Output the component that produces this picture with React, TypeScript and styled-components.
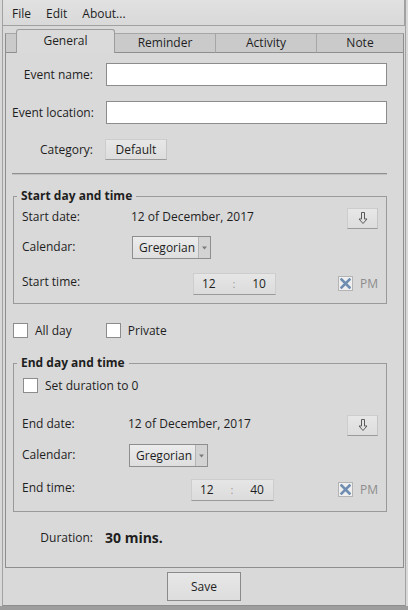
import React from "react";
import styled, { createGlobalStyle } from "styled-components";

const Global = createGlobalStyle`
  html, body { margin: 0; padding: 0; background: #d9d9d9; }
  body {
    font-family: "Open Sans", "Noto Sans", sans-serif;
    font-size: 12px;
    line-height: 16px;
    color: #1e1e1e;
  }
  * { box-sizing: border-box; }
`;

const Window = styled.div`
  width: 408px;
  height: 610px;
  padding: 0 2px;
  background: #d9d9d9;
  display: flex;
  flex-direction: column;
  border-bottom: 4px solid #9d9d9d;
`;

const Frame = styled.div`
  flex: 1;
  display: flex;
  flex-direction: column;
  border-left: 1px solid #a2a2a2;
  border-right: 1px solid #a2a2a2;
  border-bottom: 1px solid #8e8e8e;
  min-height: 0;
`;

const MenuBar = styled.div`
  height: 26px;
  display: flex;
  align-items: center;
  gap: 15px;
  padding: 2px 0 0 9px;
  background: linear-gradient(#e1e1e1, #d9d9d9);
  border-bottom: 1px solid #a0a0a0;
  border-right: 1px solid #a0a0a0;
`;

const MenuItem = styled.span`
  color: #1e1e1e;
`;

const TabBar = styled.div`
  margin: 3px 1px 0 2px;
  height: 24px;
  display: flex;
  align-items: flex-end;
`;

const TabLead = styled.div`
  width: 11px;
  height: 20px;
  background: #cacaca;
  border-left: 1px solid #8e8e8e;
  border-top: 1px solid #a6a6a6;
  border-bottom: 1px solid #8e8e8e;
`;

const Tab = styled.div<{ $w: number; $active?: boolean; $last?: boolean }>`
  width: ${(p) => p.$w}px;
  height: ${(p) => (p.$active ? 24 : 20)}px;
  display: flex;
  align-items: center;
  justify-content: center;
  padding-bottom: ${(p) => (p.$active ? 1 : 0)}px;
  background: ${(p) => (p.$active ? "#dadada" : "#cacaca")};
  border-top: 1px solid ${(p) => (p.$active ? "#9c9c9c" : "#a6a6a6")};
  border-left: ${(p) => (p.$active ? "1px solid #9c9c9c" : "none")};
  border-right: 1px solid ${(p) => (p.$active ? "#9c9c9c" : p.$last ? "#8e8e8e" : "#a6a6a6")};
  border-bottom: ${(p) => (p.$active ? "none" : "1px solid #8e8e8e")};
  border-radius: ${(p) => (p.$active ? "3px 3px 0 0" : "0")};
  color: #1e1e1e;
`;

const Panel = styled.div`
  flex: 1;
  margin: 0 1px 0 2px;
  border: 1px solid #8e8e8e;
  border-top: none;
  padding: 10px 16px 0 6px;
  display: flex;
  flex-direction: column;
`;

const FormGrid = styled.div`
  display: grid;
  grid-template-columns: 81px 1fr;
  column-gap: 13px;
  row-gap: 15px;
  align-items: center;
`;

const FormLabel = styled.label`
  text-align: right;
  white-space: nowrap;
`;

const TextInput = styled.input`
  height: 23px;
  width: 100%;
  border: 1px solid #8c8c8c;
  background: #ffffff;
  padding: 0 4px;
  font: inherit;
  outline: none;
`;

const Button = styled.button<{ $w: number; $h: number; $framed?: boolean }>`
  width: ${(p) => p.$w}px;
  height: ${(p) => p.$h}px;
  padding: 0;
  font: inherit;
  color: #1e1e1e;
  display: flex;
  align-items: center;
  justify-content: center;
  background: linear-gradient(#e7e7e7, #dddddd);
  border: 1px solid ${(p) => (p.$framed ? "#8a8a8a" : "#cdcdcd")};
  border-bottom-color: ${(p) => (p.$framed ? "#8a8a8a" : "#9a9a9a")};
  border-right-color: ${(p) => (p.$framed ? "#8a8a8a" : "#c4c4c4")};
  border-radius: 0;
`;

const CategoryButton = styled(Button)`
  margin-left: -1px;
`;

const Separator = styled.div`
  margin-top: 13px;
  height: 2px;
  border-top: 1px solid #8f8f8f;
  border-bottom: 1px solid #c2c2c2;
`;

const Group = styled.fieldset<{ $mt: number; $pt: number; $pb: number }>`
  margin: ${(p) => p.$mt}px 0 0 1px;
  border: 1px solid #9a9a9a;
  padding: ${(p) => p.$pt}px 8px ${(p) => p.$pb}px 8px;
  min-width: 0;
`;

const Legend = styled.legend`
  font-weight: 700;
  line-height: 14px;
  padding: 0 4px;
  margin-left: -5px;
`;

const Row = styled.div<{ $mt?: number; $h: number }>`
  display: flex;
  align-items: center;
  height: ${(p) => p.$h}px;
  margin-top: ${(p) => p.$mt ?? 0}px;
`;

const RowLabel = styled.span<{ $w: number; $lift?: number }>`
  width: ${(p) => p.$w}px;
  flex: none;
  white-space: nowrap;
  padding-bottom: ${(p) => (p.$lift ?? 0) * 2}px;
`;

const Value = styled.span<{ $lift?: number }>`
  white-space: nowrap;
  padding-bottom: ${(p) => (p.$lift ?? 0) * 2}px;
`;

const Right = styled.div`
  margin-left: auto;
  display: flex;
  align-items: center;
  gap: 7px;
`;

const Combo = styled.div`
  width: 79px;
  height: 23px;
  display: flex;
  border: 1px solid #8e8e8e;
  background: linear-gradient(#ececec, #dedede);
`;

const ComboText = styled.span`
  flex: 1;
  display: flex;
  align-items: center;
  padding-left: 6px;
`;

const ComboArrow = styled.span`
  width: 12px;
  display: flex;
  align-items: center;
  justify-content: center;
  background: #d3d3d3;
  border-left: 1px solid #b4b4b4;
`;

const TimeBox = styled.div<{ $ml: number }>`
  margin-left: ${(p) => p.$ml}px;
  width: 83px;
  height: 22px;
  display: flex;
  align-items: center;
  justify-content: space-between;
  padding: 0 9px 0 8px;
  background: linear-gradient(#e6e6e6, #dcdcdc);
  border: 1px solid #cdcdcd;
  border-bottom-color: #9a9a9a;
`;

const Colon = styled.span`
  color: #9a9a9a;
  font-size: 11px;
`;

const Dim = styled.span`
  color: #8c8c8c;
`;

const CheckRow = styled.div<{ $mt: number; $ml: number }>`
  display: flex;
  align-items: center;
  gap: 34px;
  margin: ${(p) => p.$mt}px 0 0 ${(p) => p.$ml}px;
  height: 15px;
`;

const CheckItem = styled.label`
  display: flex;
  align-items: center;
  gap: 7px;
  white-space: nowrap;
`;

const Box = styled.span<{ $disabled?: boolean }>`
  width: 15px;
  height: 15px;
  flex: none;
  display: flex;
  align-items: center;
  justify-content: center;
  background: ${(p) => (p.$disabled ? "#efefef" : "#ffffff")};
  border: 1px solid ${(p) => (p.$disabled ? "#b4b4b4" : "#8c8c8c")};
`;

const DurationRow = styled.div`
  display: grid;
  grid-template-columns: 81px auto;
  column-gap: 12px;
  align-items: center;
  margin-top: 16px;
`;

const DurationValue = styled.span`
  font-weight: 700;
  font-size: 14px;
  line-height: 20px;
`;

const Footer = styled.div`
  height: 37px;
  display: flex;
  align-items: center;
  justify-content: center;
`;

const DownArrow = () => (
  <svg width="10" height="13" viewBox="0 0 10 13">
    <path d="M3.5 0.5 H6.5 V7 H9 L5 11.5 L1 7 H3.5 Z" fill="none" stroke="#5a5a5a" strokeWidth="1" />
  </svg>
);

const Caret = () => (
  <svg width="5" height="4" viewBox="0 0 5 4">
    <path d="M0 0.5 H5 L2.5 3.5 Z" fill="#7a7a7a" />
  </svg>
);

const Cross = () => (
  <svg width="11" height="11" viewBox="0 0 11 11">
    <path d="M1.5 1.5 L9.5 9.5 M9.5 1.5 L1.5 9.5" stroke="#6e8db0" strokeWidth="2.6" strokeLinecap="square" />
  </svg>
);

type TimeProps = { label: string; labelW: number; ml: number; h: string; m: string; mt: number };

const TimeRow = ({ label, labelW, ml, h, m, mt }: TimeProps) => (
  <Row $h={23} $mt={mt}>
    <RowLabel $w={labelW} $lift={2}>{label}</RowLabel>
    <TimeBox $ml={ml}>
      <span>{h}</span>
      <Colon>:</Colon>
      <span>{m}</span>
    </TimeBox>
    <Right>
      <Box $disabled>
        <Cross />
      </Box>
      <Dim>PM</Dim>
    </Right>
  </Row>
);

type DateBlockProps = { kind: "Start" | "End"; labelW: number; ml: number; m: string; first: number; gaps: [number, number] };

const DateRows = ({ kind, labelW, ml, m, first, gaps }: DateBlockProps) => (
  <>
    <Row $h={23} $mt={first}>
      <RowLabel $w={labelW} $lift={2}>{kind} date:</RowLabel>
      <Value $lift={2}>12 of December, 2017</Value>
      <Right>
        <Button $w={31} $h={21}>
          <DownArrow />
        </Button>
      </Right>
    </Row>
    <Row $h={23} $mt={gaps[0]}>
      <RowLabel $w={labelW + 1} $lift={1}>Calendar:</RowLabel>
      <Combo>
        <ComboText>Gregorian</ComboText>
        <ComboArrow>
          <Caret />
        </ComboArrow>
      </Combo>
    </Row>
    <TimeRow label={`${kind} time:`} labelW={labelW} ml={ml} h="12" m={m} mt={gaps[1]} />
  </>
);

export default function App() {
  return (
    <>
      <Global />
      <Window>
        <Frame>
          <MenuBar>
            <MenuItem>File</MenuItem>
            <MenuItem>Edit</MenuItem>
            <MenuItem>About...</MenuItem>
          </MenuBar>
          <TabBar>
            <TabLead />
            <Tab $w={99} $active>General</Tab>
            <Tab $w={101}>Reminder</Tab>
            <Tab $w={101}>Activity</Tab>
            <Tab $w={87} $last>Note</Tab>
          </TabBar>
          <Panel>
            <FormGrid>
              <FormLabel>Event name:</FormLabel>
              <TextInput />
              <FormLabel>Event location:</FormLabel>
              <TextInput />
              <FormLabel>Category:</FormLabel>
              <div>
                <CategoryButton $w={62} $h={21}>Default</CategoryButton>
              </div>
            </FormGrid>
            <Separator />
            <Group $mt={14} $pt={0} $pb={8}>
              <Legend>Start day and time</Legend>
              <DateRows kind="Start" labelW={109} ml={62} m="10" first={4} gaps={[6, 13]} />
            </Group>
            <CheckRow $mt={19} $ml={1}>
              <CheckItem>
                <Box />
                All day
              </CheckItem>
              <CheckItem>
                <Box />
                Private
              </CheckItem>
            </CheckRow>
            <Group $mt={18} $pt={0} $pb={10}>
              <Legend>End day and time</Legend>
              <CheckRow $mt={8} $ml={1}>
                <CheckItem>
                  <Box />
                  Set duration to 0
                </CheckItem>
              </CheckRow>
              <DateRows kind="End" labelW={106} ml={63} m="40" first={21} gaps={[7, 11]} />
            </Group>
            <DurationRow>
              <FormLabel>Duration:</FormLabel>
              <DurationValue>30 mins.</DurationValue>
            </DurationRow>
          </Panel>
          <Footer>
            <Button $w={74} $h={29} $framed>Save</Button>
          </Footer>
        </Frame>
      </Window>
    </>
  );
}
